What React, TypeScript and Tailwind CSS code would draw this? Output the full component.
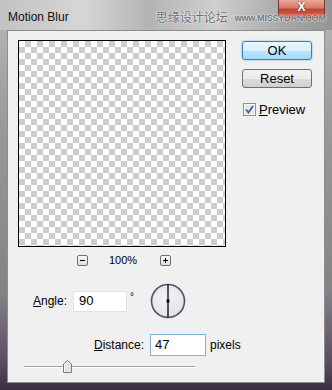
import React from "react";

function Checkmark() {
  return (
    <svg width="13" height="13" viewBox="0 0 13 13">
      <rect x="0.5" y="0.5" width="12" height="12" fill="#fafafa" stroke="#8e8f8f" />
      <rect x="2" y="2" width="9" height="9" fill="#e6e8ea" />
      <path d="M3 6.5 L5.4 9.5 L10 3" fill="none" stroke="#3a5fa8" strokeWidth="1.8" />
    </svg>
  );
}

function Dial() {
  return (
    <svg width="36" height="36" viewBox="0 0 36 36">
      <defs>
        <radialGradient id="dg" cx="0.45" cy="0.4" r="0.6">
          <stop offset="0" stopColor="#f4f4f6" />
          <stop offset="1" stopColor="#e2e2e8" />
        </radialGradient>
      </defs>
      <circle cx="18" cy="18" r="16.5" fill="url(#dg)" stroke="#4f5668" strokeWidth="1.6" />
      <line x1="18" y1="1.5" x2="18" y2="34.5" stroke="#000" strokeWidth="1.3" />
      <rect x="16.5" y="16.5" width="3" height="3" fill="#000" />
    </svg>
  );
}

function Thumb() {
  return (
    <svg width="9" height="13" viewBox="0 0 9 13">
      <path d="M0.5 12.5 L0.5 4 L4.5 0.5 L8.5 4 L8.5 12.5 Z" fill="#e4e4e4" stroke="#7a7a7a" />
      <path d="M1.5 11.5 L1.5 4.5 L4.5 1.8" fill="none" stroke="#ffffff" />
    </svg>
  );
}

export default function App() {
  return (
    <div className="relative w-[332px] h-[390px] overflow-hidden bg-[linear-gradient(180deg,#b9b9b9_0%,#9b9b9b_30%,#838286_75%,#5a4c62_93%,#3b2f40_100%)] font-['Liberation_Sans',Arial,sans-serif] text-[12px] text-black">
      {/* Close button overlay */}
      <div className="absolute left-[278px] top-0 w-[47px] h-[18px] rounded-b-[4px] border border-t-0 border-[#6b3a34] bg-[linear-gradient(180deg,#e9a99c_0%,#d97a68_45%,#c3432e_55%,#d36650_100%)] flex items-start justify-center">
        <span className="mt-[1px] text-white font-bold text-[12px] leading-none [text-shadow:0_0_2px_#5a1a10]">X</span>
      </div>
      {/* Title bar */}
      <div className="h-[30px] flex items-center bg-[linear-gradient(90deg,#c2c2c2_0%,#d6d6d6_25%,#b4b4b4_45%,#cfcfcf_65%,#a9a9a9_85%,#959595_100%)]">
        <span className="ml-[8px] mt-[3px] text-[12px] text-[#111]">Motion Blur</span>
        <span className="ml-[87px] mt-[3px] text-[12px] leading-none text-[#6b6b6b] font-['Noto_Sans_CJK_SC',sans-serif] [text-shadow:0_0_2px_#fff,0_0_1px_#fff]">
          思缘设计论坛
        </span>
        <span className="relative z-10 ml-[7px] mt-[7px] text-[9px] leading-none font-bold tracking-[-0.2px] text-[#707070] [text-shadow:0_0_2px_#fff,0_0_1px_#fff]">
          www.MISSYUAN.COM
        </span>
      </div>

      {/* Client area */}
      <div className="mx-[7px] h-[353px] border border-[#8d8d8d] bg-[#f0f0f0] flex flex-col">
        {/* Top row */}
        <div className="flex pl-[10px] pt-[9px]">
          <div className="flex flex-col w-[208px]">
            <div className="w-[208px] h-[207px] border border-black bg-[image:conic-gradient(#cdcdcd_25%,#ffffff_0_50%,#cdcdcd_0_75%,#ffffff_0)] bg-[length:12px_12px]" />
            <div className="flex items-center h-[11px] mt-[8px]">
              <div className="ml-[59px] w-[11px] h-[11px] rounded-[2px] border border-[#6f6f6f] bg-[linear-gradient(#f8f8f8,#dcdcdc)] flex items-center justify-center">
                <div className="w-[5px] h-[1px] bg-black" />
              </div>
              <span className="ml-[21px] text-[11px] leading-none">100%</span>
              <div className="ml-[23px] w-[11px] h-[11px] rounded-[2px] border border-[#6f6f6f] bg-[linear-gradient(#f8f8f8,#dcdcdc)] flex items-center justify-center relative">
                <div className="w-[5px] h-[1px] bg-black" />
                <div className="absolute w-[1px] h-[5px] bg-black" />
              </div>
            </div>
          </div>
          <div className="ml-[16px] mt-[1px] flex flex-col">
            <div className="w-[70px] h-[19px] rounded-[3px] border border-[#3c7fb1] shadow-[0_0_2px_#5ab0e8] bg-[linear-gradient(180deg,#eaf6fd_0%,#d9f0fc_50%,#bee6fd_51%,#a7d9f5_100%)] flex items-center justify-center text-[13px]">
              OK
            </div>
            <div className="mt-[9px] w-[70px] h-[19px] rounded-[3px] border border-[#707070] bg-[linear-gradient(180deg,#f2f2f2_0%,#ebebeb_50%,#dddddd_51%,#cfcfcf_100%)] flex items-center justify-center text-[13px]">
              Reset
            </div>
            <div className="mt-[15px] ml-[1px] flex items-center">
              <Checkmark />
              <span className="ml-[3px] text-[13px] leading-none">
                <span className="underline">P</span>review
              </span>
            </div>
          </div>
        </div>

        {/* Angle row */}
        <div className="flex items-center mt-[17px] h-[36px]">
          <span className="ml-[25px] text-[12px]">
            <span className="underline">A</span>ngle:
          </span>
          <div className="ml-[6px] w-[54px] h-[21px] bg-white border border-[#e2e3ea] flex items-center pl-[5px] text-[13px]">
            90
          </div>
          <span className="ml-[3px] self-start mt-[9px] text-[10px] leading-none">°</span>
          <div className="ml-[16px]">
            <Dial />
          </div>
        </div>

        {/* Distance row */}
        <div className="flex items-center mt-[15px] h-[22px]">
          <span className="ml-[86px] text-[12px]">
            <span className="underline">D</span>istance:
          </span>
          <div className="ml-[6px] w-[56px] h-[22px] bg-white border border-[#7eb4d8] flex items-center pl-[4px] text-[13px]">
            47
          </div>
          <span className="ml-[4px] text-[12px]">pixels</span>
        </div>

        {/* Slider */}
        <div className="relative mt-[4px] h-[13px] ml-[16px] w-[174px]">
          <div className="absolute left-0 top-[6px] w-[171px] h-[1px] bg-[#a0a0a0]" />
          <div className="absolute left-0 top-[7px] w-[171px] h-[1px] bg-white" />
          <div className="absolute left-[39px] top-0">
            <Thumb />
          </div>
        </div>
      </div>
    </div>
  );
}
